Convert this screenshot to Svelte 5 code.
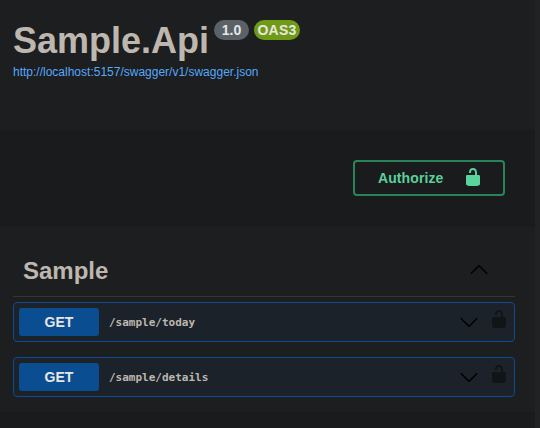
<script>
  const operations = [
    { method: 'GET', path: '/sample/today' },
    { method: 'GET', path: '/sample/details' }
  ];
  const unlocked =
    'M15.8 8H14V5.6C14 2.703 12.665 1 10 1 7.334 1 6 2.703 6 5.6V6h2v-.801C8 3.754 8.797 3 10 3c1.203 0 2 .754 2 2.199V8H4c-.553 0-1 .646-1 1.199V17c0 .549.428 1.139.951 1.307l1.197.387C5.672 18.861 6.55 19 7.1 19h5.8c.549 0 1.428-.139 1.951-.307l1.196-.387c.524-.167.953-.757.953-1.306V9.199C17 8.646 16.352 8 15.8 8z';
  const chevronDown =
    'M17.418 6.109c.272-.268.709-.268.979 0s.271.701 0 .969l-7.908 7.83c-.27.268-.707.268-.979 0l-7.908-7.83c-.27-.268-.27-.701 0-.969.271-.268.709-.268.979 0L10 13.25z';
  const chevronUp =
    'M17.418 14.908c.272.268.709.268.979 0s.271-.701 0-.969l-7.908-7.83c-.27-.268-.707-.268-.979 0l-7.908 7.83c-.27.268-.27.701 0 .969.271.268.709.268.979 0L10 7.767z';
</script>

<div class="page">
  <main>
    <header>
      <div class="heading">
        <h1>Sample.Api</h1>
        <span class="badge version">1.0</span>
        <span class="badge oas">OAS3</span>
      </div>
      <a href="#spec">http://localhost:5157/swagger/v1/swagger.json</a>
    </header>

    <section class="schemes">
      <button class="authorize">
        <span>Authorize</span>
        <svg width="20" height="20" viewBox="0 0 20 20"><path d={unlocked} /></svg>
      </button>
    </section>

    <section class="operations">
      <div class="tag">
        <h2>Sample</h2>
        <svg width="20" height="20" viewBox="0 0 20 20"><path d={chevronUp} /></svg>
      </div>
      {#each operations as op}
        <div class="operation">
          <span class="method">{op.method}</span>
          <span class="path">{op.path}</span>
          <svg class="arrow" width="20" height="20" viewBox="0 0 20 20"><path d={chevronDown} /></svg>
          <svg class="lock" width="20" height="20" viewBox="0 0 20 20"><path d={unlocked} /></svg>
        </div>
      {/each}
    </section>
    <div class="bottom"></div>
  </main>
  <div class="gutter"></div>
</div>

<style>
  :global(body) {
    margin: 0;
    background: #1c1e1f;
  }
  .page {
    display: flex;
    width: 540px;
    height: 428px;
    overflow: hidden;
    font-family: 'Liberation Sans', Arial, sans-serif;
    background: #1c1e1f;
  }
  main {
    display: flex;
    flex-direction: column;
    width: 535px;
  }
  .gutter {
    width: 5px;
    background: #202223;
  }
  header {
    box-sizing: border-box;
    height: 130px;
    padding: 20px 13px 0;
  }
  .heading {
    display: flex;
    align-items: flex-start;
    height: 44px;
  }
  h1 {
    margin: 0;
    width: 201px;
    font-size: 36px;
    line-height: 41px;
    color: #bdb7af;
  }
  .badge {
    box-sizing: border-box;
    height: 20px;
    border-radius: 10px;
    text-align: center;
    font-size: 14px;
    font-weight: bold;
    line-height: 20px;
    color: #e8e6e3;
  }
  .version {
    width: 35px;
    margin-right: 5px;
    background: #5a6267;
  }
  .oas {
    width: 46px;
    background: #6f9a16;
    letter-spacing: 0.2px;
  }
  a {
    display: block;
    font-size: 12px;
    line-height: 16px;
    color: #57a8fb;
    text-decoration: none;
  }
  .schemes {
    display: flex;
    justify-content: flex-end;
    align-items: flex-start;
    box-sizing: border-box;
    height: 97px;
    padding: 30px 30px 0 0;
    background: #1a1b1c;
  }
  .authorize {
    display: flex;
    align-items: center;
    box-sizing: border-box;
    width: 152px;
    height: 36px;
    padding: 0 20px 2px 23px;
    border: 2px solid #298559;
    border-radius: 4px;
    background: transparent;
    color: #5bd09b;
    font: bold 14px 'Liberation Sans', Arial, sans-serif;
    letter-spacing: 0.1px;
    justify-content: space-between;
  }
  .authorize span {
    padding-top: 2px;
  }
  .authorize svg {
    fill: #5bd39c;
  }
  .operations {
    height: 185px;
    padding: 21px 20px 0 13px;
    box-sizing: border-box;
  }
  .tag {
    display: flex;
    justify-content: space-between;
    align-items: center;
    box-sizing: border-box;
    height: 49px;
    padding: 0 26px 4px 10px;
    border-bottom: 1px solid #353532;
    margin-bottom: 5px;
  }
  .tag svg {
    margin-bottom: 2px;
  }
  h2 {
    margin: 0;
    padding-top: 2px;
    font-size: 24px;
    line-height: 28px;
    color: #bdb7af;
  }
  .operation {
    display: flex;
    align-items: center;
    box-sizing: border-box;
    height: 40px;
    margin-bottom: 15px;
    padding: 0 5px;
    border: 1px solid #0c4c91;
    border-radius: 4px;
    background: #1b222a;
  }
  .method {
    width: 80px;
    height: 28px;
    border-radius: 3px;
    background: #0b4d91;
    color: #e8e6e3;
    font-size: 14px;
    font-weight: bold;
    line-height: 28px;
    text-align: center;
  }
  .path {
    flex: 1;
    padding-left: 10px;
    font: bold 11px 'DejaVu Sans Mono', monospace;
    color: #bdb7af;
  }
  .arrow {
    margin-right: 10px;
  }
  .lock {
    margin-bottom: 6px;
    fill: #101518;
  }
  .bottom {
    flex: 1;
    background: #1a1b1c;
  }
</style>
